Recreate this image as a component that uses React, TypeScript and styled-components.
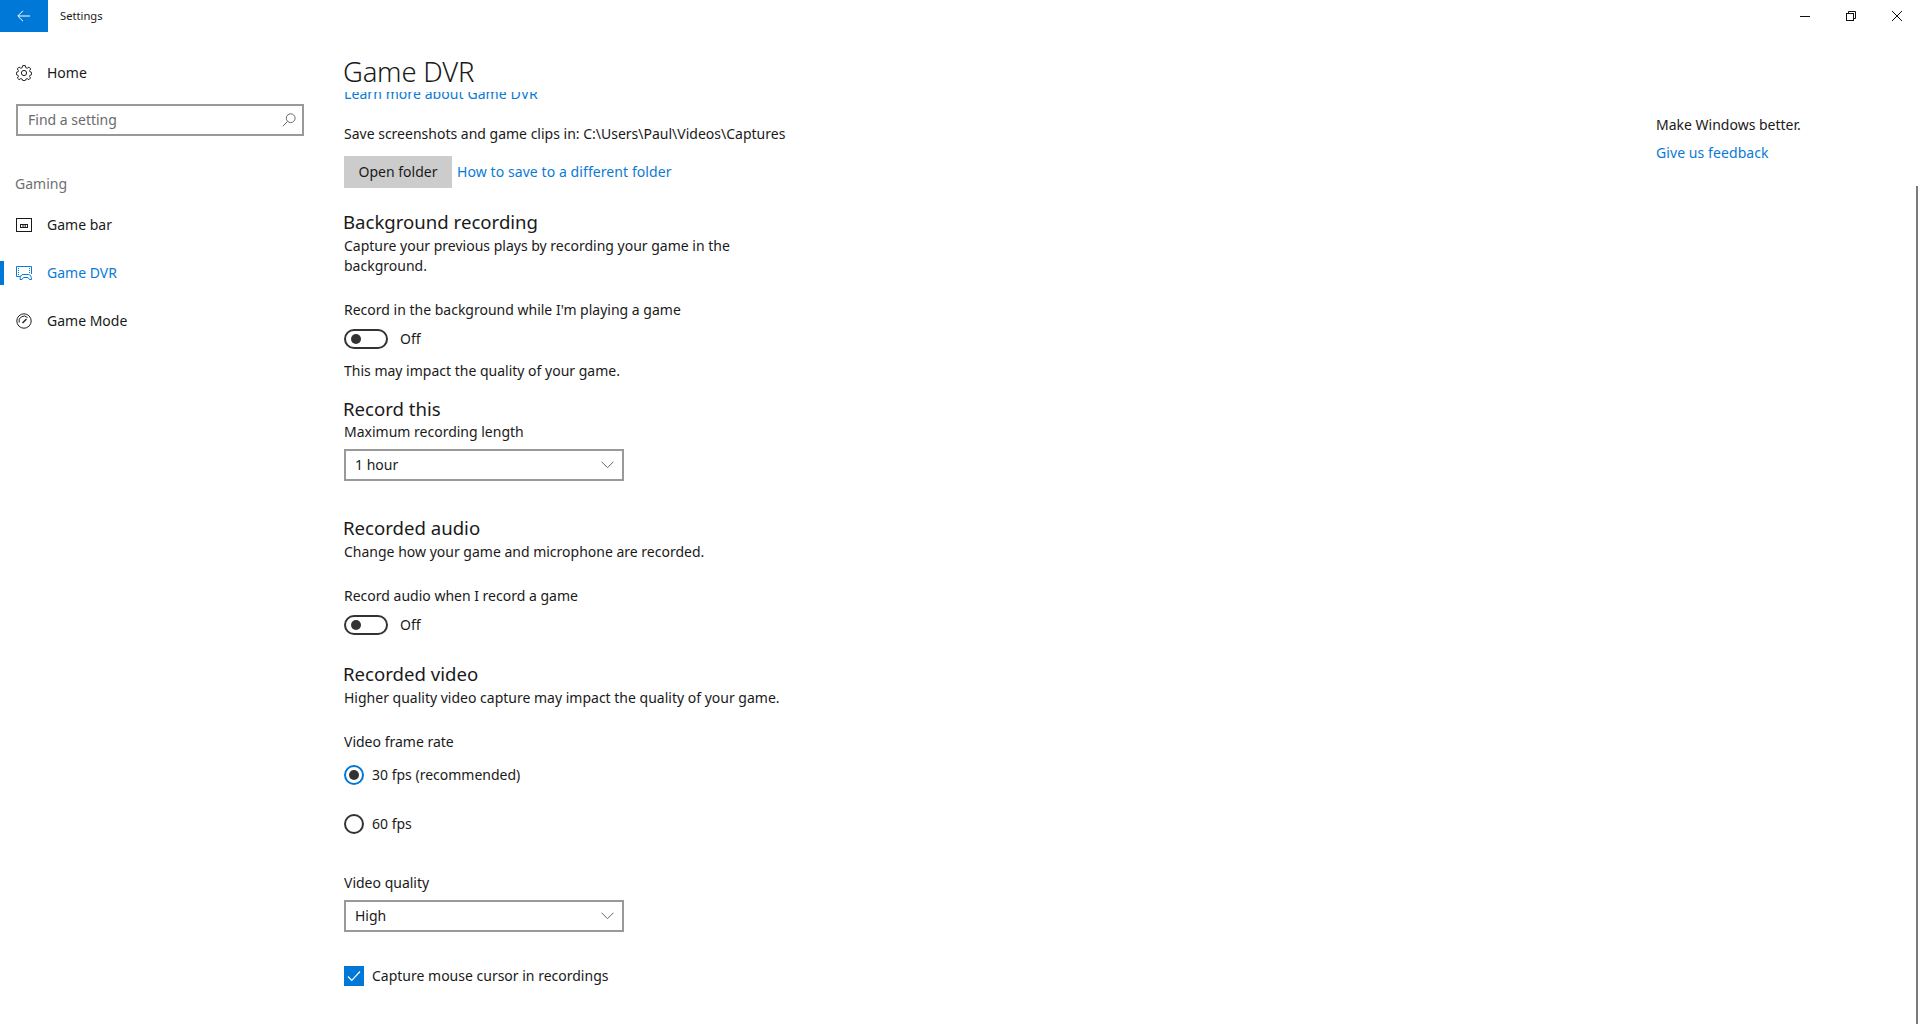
import styled, { createGlobalStyle } from "styled-components";

const ACCENT = "#0078d7";
const LINK = "#0a7ad6";
const TEXT = "#1a1a1a";

const GlobalStyle = createGlobalStyle`
  html, body {
    margin: 0;
    height: 100%;
    overflow: hidden;
    background: #fff;
  }
  #root {
    height: 100%;
  }
  * {
    box-sizing: border-box;
  }
`;

const Window = styled.div`
  position: relative;
  display: flex;
  flex-direction: column;
  height: 1034px;
  color: ${TEXT};
  font-family: "Noto Sans", "Open Sans", Arial, sans-serif;
  font-size: 14px;
  line-height: 20px;
`;

const TitleBar = styled.header`
  display: flex;
  align-items: center;
  height: 32px;
  flex: none;
`;

const BackButton = styled.div`
  display: flex;
  align-items: center;
  justify-content: center;
  width: 48px;
  height: 32px;
  background: ${ACCENT};
`;

const WindowTitle = styled.span`
  margin-left: 12px;
  flex: 1;
  font-size: 11.2px;
`;

const CaptionButton = styled.div`
  display: flex;
  align-items: center;
  justify-content: center;
  width: 46px;
  height: 32px;
  transform: translateX(1px);
`;

const Body = styled.div`
  display: flex;
  flex: 1;
  min-height: 0;
`;

const Sidebar = styled.nav`
  width: 344px;
  flex: none;
  padding-top: 17px;
`;

const NavItem = styled.div<{ $active?: boolean }>`
  position: relative;
  display: flex;
  align-items: center;
  gap: 15px;
  width: 320px;
  height: 48px;
  padding-left: 16px;
  color: ${({ $active }) => ($active ? LINK : TEXT)};

  &::before {
    content: "";
    display: ${({ $active }) => ($active ? "block" : "none")};
    position: absolute;
    left: 0;
    top: 12px;
    width: 4px;
    height: 24px;
    background: ${ACCENT};
  }
`;

const SearchBox = styled.div`
  display: flex;
  align-items: center;
  justify-content: space-between;
  width: 288px;
  height: 32px;
  margin: 7px 0 0 16px;
  padding: 0 6px 0 10px;
  border: 2px solid #999;
  color: #6b6b6b;
`;

const GroupLabel = styled.div`
  margin: 38px 0 0 15px;
  height: 20px;
  color: #707070;
`;

const GameBarItem = styled(NavItem)`
  margin-top: 7px;
`;

const Main = styled.main`
  flex: 1;
  min-width: 0;
  display: flex;
  flex-direction: column;
`;

const PageTitle = styled.h1`
  margin: 16px 0 0;
  flex: none;
  height: 44px;
  font-size: 27.4px;
  font-weight: 300;
  line-height: 48px;
  letter-spacing: -0.2px;
  transform: translateX(-1px);
`;

const Scroller = styled.div`
  flex: 1;
  min-height: 0;
  overflow: hidden;
`;

const ScrollContent = styled.div`
  margin-top: -8px;
`;

const Anchor = styled.a`
  color: ${LINK};
  letter-spacing: 0.08px;
`;

const Line = styled.div<{ $top?: number }>`
  margin-top: ${({ $top }) => $top ?? 0}px;
`;

const ButtonRow = styled.div`
  display: flex;
  align-items: center;
  gap: 5px;
  margin-top: 12px;
  padding-bottom: 0;
`;

const FolderButton = styled.div`
  display: flex;
  align-items: center;
  justify-content: center;
  width: 108px;
  height: 32px;
  background: #ccc;
`;

const Heading = styled.h2<{ $top: number }>`
  margin: ${({ $top }) => $top}px 0 0 -1px;
  height: 28px;
  font-size: 18.6px;
  font-weight: 400;
  line-height: 28px;
`;

const Description = styled.div`
  width: 420px;
`;

const ToggleRow = styled.div`
  display: flex;
  align-items: center;
  gap: 12px;
  height: 20px;
  margin-top: 9px;
`;

const ToggleTrack = styled.div`
  display: flex;
  align-items: center;
  width: 44px;
  height: 20px;
  padding-left: 5px;
  border: 2px solid #333;
  border-radius: 10px;

  &::before {
    content: "";
    width: 10px;
    height: 10px;
    border-radius: 50%;
    background: #333;
  }
`;

const Select = styled.div<{ $top: number }>`
  display: flex;
  align-items: center;
  justify-content: space-between;
  width: 280px;
  height: 32px;
  margin-top: ${({ $top }) => $top}px;
  padding: 0 8px 0 9px;
  border: 2px solid #999;
`;

const RadioRow = styled.div<{ $top: number }>`
  display: flex;
  align-items: center;
  gap: 8px;
  height: 20px;
  margin-top: ${({ $top }) => $top}px;
`;

const RadioCircle = styled.div<{ $checked?: boolean }>`
  display: flex;
  align-items: center;
  justify-content: center;
  width: 20px;
  height: 20px;
  border: 2px solid ${({ $checked }) => ($checked ? ACCENT : "#333")};
  border-radius: 50%;

  &::before {
    content: "";
    display: ${({ $checked }) => ($checked ? "block" : "none")};
    width: 10px;
    height: 10px;
    border-radius: 50%;
    background: #333;
  }
`;

const CheckBox = styled.div`
  display: flex;
  align-items: center;
  justify-content: center;
  width: 20px;
  height: 20px;
  background: ${ACCENT};
`;

const Aside = styled.aside`
  width: 263px;
  flex: none;
  padding-top: 83px;
`;

const AsideLink = styled(Anchor)`
  display: block;
  margin-top: 8px;
`;

const ScrollThumb = styled.div`
  position: absolute;
  right: 1px;
  top: 186px;
  width: 2px;
  height: 838px;
  background: #7a7a7a;
`;

function ChevronDown() {
  return (
    <svg width="13" height="8" viewBox="0 0 13 8" fill="none" stroke="#666" strokeWidth="1">
      <path d="M0.5 0.7 L6.5 6.7 L12.5 0.7" />
    </svg>
  );
}

function GearIcon() {
  return (
    <svg width="16" height="16" viewBox="0 0 16 16" fill="none" stroke="#222" strokeWidth="1">
      <circle cx="8" cy="8" r="2.6" />
      <path d="M6.7 0.6 H9.3 L9.7 2.6 L11.2 3.2 L12.9 2.1 L14.7 3.9 L13.6 5.6 L14.2 7 L15.6 7.3 V9.7 L14.2 10 L13.6 11.4 L14.5 13 L12.9 14.7 L11.2 13.6 L9.8 14.2 L9.3 15.6 H6.7 L6.3 14.2 L4.8 13.6 L3.1 14.7 L1.4 13 L2.4 11.4 L1.8 10 L0.4 9.7 V7.3 L1.8 7 L2.4 5.6 L1.3 3.9 L3.1 2.1 L4.8 3.2 L6.2 2.6 Z" />
    </svg>
  );
}

function SearchIcon() {
  return (
    <svg width="14" height="14" viewBox="0 0 14 14" fill="none" stroke="#6b6b6b" strokeWidth="1">
      <circle cx="8.7" cy="5.2" r="4.4" />
      <path d="M5.6 8.4 L0.8 13.2" />
    </svg>
  );
}

function GameBarIcon() {
  return (
    <svg width="16" height="14" viewBox="0 0 16 14" fill="none" stroke="#1a1a1a" strokeWidth="1">
      <rect x="0.5" y="0.5" width="15" height="13" />
      <rect x="4.5" y="6.5" width="7" height="3" />
      <path d="M7 6.5 V9.5 M9.2 6.5 V9.5" />
    </svg>
  );
}

function GameDvrIcon() {
  return (
    <svg width="16" height="14" viewBox="0 0 16 14" fill="none" stroke={LINK} strokeWidth="1">
      <path d="M5 10.5 H0.5 V0.5 H15.5 V8" />
      <path d="M2.5 2 V9 M13.5 2 V7" strokeDasharray="1 1" />
      <path d="M4 13.5 C4 11 5 8.5 7 8.5 H12.5 C14.5 8.5 15.5 11 15.5 13.5 H13.5 L12 11.5 H7.5 L6 13.5 Z" fill="#fff" />
    </svg>
  );
}

function GameModeIcon() {
  return (
    <svg width="16" height="16" viewBox="0 0 16 16" fill="none" stroke="#222" strokeWidth="1">
      <circle cx="8" cy="8" r="7.2" />
      <path d="M3.2 9.5 A5 5 0 0 1 11.6 4.6" />
      <path d="M6.5 10 L10.5 6" strokeWidth="1.4" />
    </svg>
  );
}

export default function App() {
  return (
    <Window>
      <GlobalStyle />
      <TitleBar>
        <BackButton>
          <svg width="14" height="12" viewBox="0 0 14 12" fill="none" stroke="#fff" strokeWidth="1">
            <path d="M13 6 H1 M6 0.8 L0.8 6 L6 11.2" />
          </svg>
        </BackButton>
        <WindowTitle>Settings</WindowTitle>
        <CaptionButton>
          <svg width="10" height="1" viewBox="0 0 10 1"><rect width="10" height="1" fill="#111" /></svg>
        </CaptionButton>
        <CaptionButton>
          <svg width="10" height="10" viewBox="0 0 10 10" fill="none" stroke="#111" strokeWidth="1">
            <rect x="0.5" y="2.5" width="7" height="7" />
            <path d="M2.5 2.5 V0.5 H9.5 V7.5 H7.5" />
          </svg>
        </CaptionButton>
        <CaptionButton>
          <svg width="10" height="10" viewBox="0 0 10 10" fill="none" stroke="#111" strokeWidth="1">
            <path d="M0 0 L10 10 M10 0 L0 10" />
          </svg>
        </CaptionButton>
      </TitleBar>
      <Body>
        <Sidebar>
          <NavItem>
            <GearIcon />
            Home
          </NavItem>
          <SearchBox>
            Find a setting
            <SearchIcon />
          </SearchBox>
          <GroupLabel>Gaming</GroupLabel>
          <GameBarItem>
            <GameBarIcon />
            Game bar
          </GameBarItem>
          <NavItem $active>
            <GameDvrIcon />
            Game DVR
          </NavItem>
          <NavItem>
            <GameModeIcon />
            Game Mode
          </NavItem>
        </Sidebar>
        <Main>
          <PageTitle>Game DVR</PageTitle>
          <Scroller>
            <ScrollContent>
              <Anchor>Learn more about Game DVR</Anchor>
              <Line $top={20}>Save screenshots and game clips in: C:\Users\Paul\Videos\Captures</Line>
              <ButtonRow>
                <FolderButton>Open folder</FolderButton>
                <Anchor>How to save to a different folder</Anchor>
              </ButtonRow>
              <Heading $top={20}>Background recording</Heading>
              <Description>Capture your previous plays by recording your game in the background.</Description>
              <Line $top={24}>Record in the background while I'm playing a game</Line>
              <ToggleRow>
                <ToggleTrack />
                Off
              </ToggleRow>
              <Line $top={12}>This may impact the quality of your game.</Line>
              <Heading $top={14}>Record this</Heading>
              <Line $top={-1}>Maximum recording length</Line>
              <Select $top={7}>
                1 hour
                <ChevronDown />
              </Select>
              <Heading $top={33}>Recorded audio</Heading>
              <Line>Change how your game and microphone are recorded.</Line>
              <Line $top={24}>Record audio when I record a game</Line>
              <ToggleRow>
                <ToggleTrack />
                Off
              </ToggleRow>
              <Heading $top={25}>Recorded video</Heading>
              <Line>Higher quality video capture may impact the quality of your game.</Line>
              <Line $top={24}>Video frame rate</Line>
              <RadioRow $top={13}>
                <RadioCircle $checked />
                30 fps (recommended)
              </RadioRow>
              <RadioRow $top={29}>
                <RadioCircle />
                60 fps
              </RadioRow>
              <Line $top={39}>Video quality</Line>
              <Select $top={7}>
                High
                <ChevronDown />
              </Select>
              <RadioRow $top={34}>
                <CheckBox>
                  <svg width="14" height="12" viewBox="0 0 14 12" fill="none" stroke="#fff" strokeWidth="1.2">
                    <path d="M1 6.5 L4.8 10.3 L13 1.5" />
                  </svg>
                </CheckBox>
                Capture mouse cursor in recordings
              </RadioRow>
            </ScrollContent>
          </Scroller>
        </Main>
        <Aside>
          <div>Make Windows better.</div>
          <AsideLink>Give us feedback</AsideLink>
        </Aside>
      </Body>
      <ScrollThumb />
    </Window>
  );
}
